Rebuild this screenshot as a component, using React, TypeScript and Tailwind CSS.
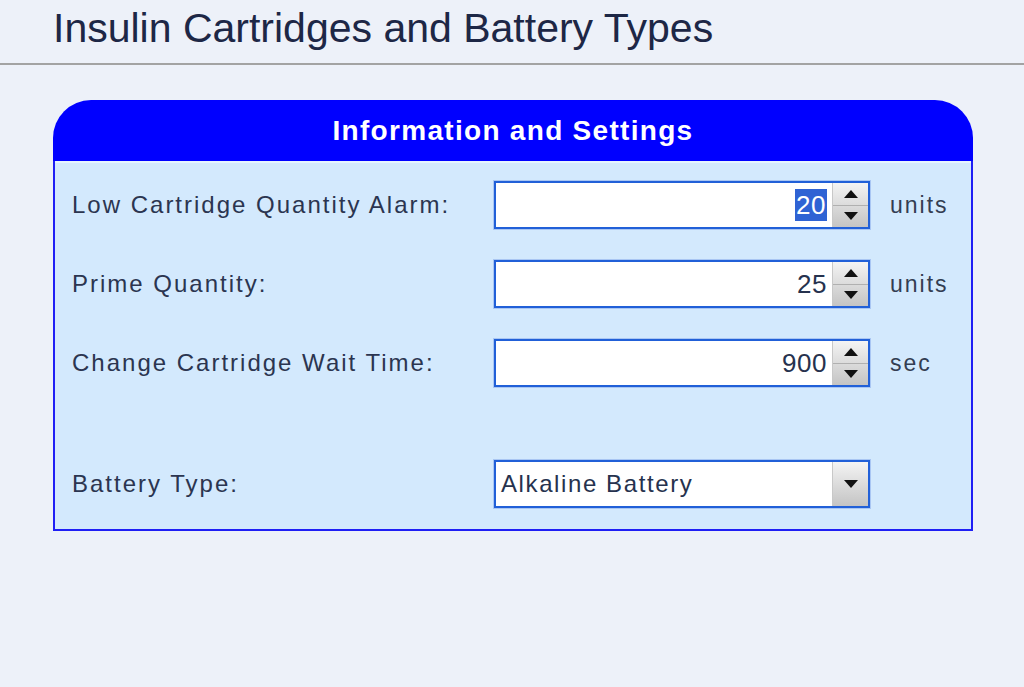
const labelFont = { fontFamily: '"Liberation Sans", Arial, sans-serif' };

function Spinner() {
  return (
    <div className="flex w-[36px] flex-col border-l border-[#c8c8c8] bg-gradient-to-b from-[#f4f4f4] to-[#c4c4c4]">
      <div className="flex flex-1 items-center justify-center border-b border-[#b0b0b0]">
        <svg width="16" height="10" viewBox="0 0 16 10"><path d="M8 1 L15 9 L1 9 Z" fill="#111" /></svg>
      </div>
      <div className="flex flex-1 items-center justify-center">
        <svg width="16" height="10" viewBox="0 0 16 10"><path d="M1 1 L15 1 L8 9 Z" fill="#111" /></svg>
      </div>
    </div>
  );
}

function NumberField({ value, unit, selected }: { value: string; unit: string; selected?: boolean }) {
  return (
    <div className="flex items-center">
      <div className="flex h-[48px] w-[376px] border-2 border-[#2160d8] bg-white shadow-[0_0_0_1px_#a9c6f3]">
        <div className="flex flex-1 items-center justify-end pr-[5px] text-[26px] tracking-[0.5px] text-[#26324e]" style={labelFont}>
          {selected ? (
            <span className="bg-[#2f63d4] px-[1px] leading-[32px] text-white">{value}</span>
          ) : (
            <span>{value}</span>
          )}
        </div>
        <Spinner />
      </div>
      <span className="ml-[20px] text-[23px] tracking-[2px] text-[#333d52]" style={labelFont}>{unit}</span>
    </div>
  );
}

function Row({ label, children }: { label: string; children: React.ReactNode }) {
  return (
    <div className="flex items-center">
      <span className="w-[422px] whitespace-nowrap text-[24px] tracking-[2px] text-[#2b3550]" style={labelFont}>{label}</span>
      {children}
    </div>
  );
}

export default function App() {
  return (
    <div className="h-[687px] w-[1024px] overflow-hidden bg-[#edf1f9]">
      <div className="h-[65px] border-b-2 border-[#a3a3a3] pl-[53px] pt-[4px]">
        <h1 className="whitespace-nowrap text-[41px] leading-[48px] text-[#1d2746]" style={labelFont}>
          Insulin Cartridges and Battery Types
        </h1>
      </div>

      <div className="ml-[53px] mt-[35px] w-[920px]">
        <div className="flex h-[61px] items-center justify-center rounded-t-[38px] bg-[#0000ff]">
          <span className="text-[28px] font-bold tracking-[1.3px] text-white" style={labelFont}>
            Information and Settings
          </span>
        </div>
        <div className="border-2 border-t-0 border-[#1f1ff5] bg-[#d3e9fd] pb-[21px] pl-[17px] pt-[20px] shadow-[inset_0_2px_0_#e6f4ff]">
          <div className="flex flex-col gap-[31px]">
            <Row label="Low Cartridge Quantity Alarm:">
              <NumberField value="20" unit="units" selected />
            </Row>
            <Row label="Prime Quantity:">
              <NumberField value="25" unit="units" />
            </Row>
            <Row label="Change Cartridge Wait Time:">
              <NumberField value="900" unit="sec" />
            </Row>
          </div>
          <div className="mt-[73px]">
            <Row label="Battery Type:">
              <div className="flex h-[48px] w-[376px] border-2 border-[#2160d8] bg-white shadow-[0_0_0_1px_#a9c6f3]">
                <div className="flex flex-1 items-center pl-[5px] text-[24px] tracking-[1.6px] text-[#26324e]" style={labelFont}>
                  Alkaline Battery
                </div>
                <div className="flex w-[36px] items-center justify-center border-l border-[#c8c8c8] bg-gradient-to-b from-[#f4f4f4] to-[#c4c4c4]">
                  <svg width="16" height="10" viewBox="0 0 16 10"><path d="M1 1 L15 1 L8 9 Z" fill="#111" /></svg>
                </div>
              </div>
            </Row>
          </div>
        </div>
      </div>
    </div>
  );
}
